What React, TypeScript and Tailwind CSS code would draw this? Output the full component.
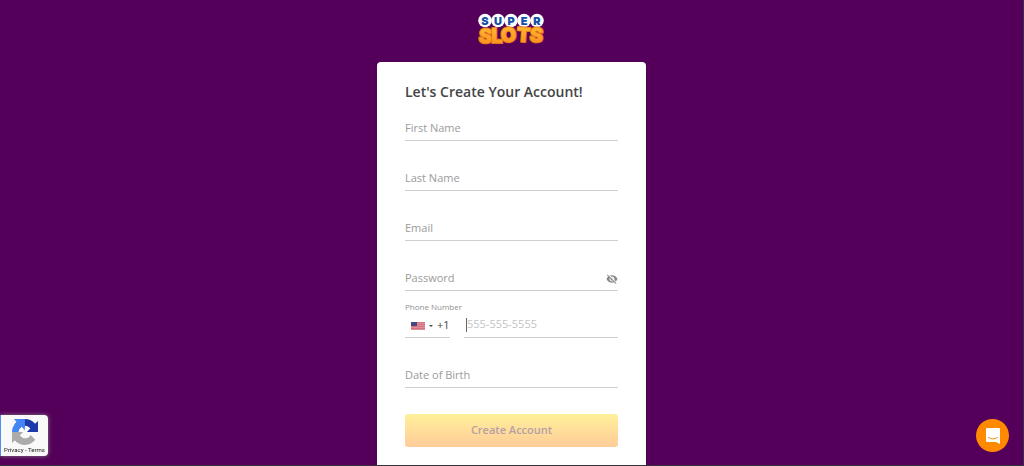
import { useState } from "react";
import { MdVisibilityOff } from "react-icons/md";

const inputStyle =
  "h-6 w-full min-w-0 border-b border-[#cfcfcf] bg-transparent pb-0.5 text-[11px] text-[#444] placeholder:text-[#9b9b9b] placeholder:opacity-100 outline-none";

const Field = ({ label, type = "text" }: { label: string; type?: string }) => (
  <input aria-label={label} placeholder={label} type={type} className={inputStyle} />
);

const superLetters = [
  { char: "S", x: 8 },
  { char: "U", x: 21 },
  { char: "P", x: 34 },
  { char: "E", x: 47 },
  { char: "R", x: 60 },
];

const slotsLetters = [
  { char: "S", x: 8, y: 31, rotate: 5 },
  { char: "L", x: 20, y: 31, rotate: 0 },
  { char: "O", x: 32, y: 30, rotate: -4 },
  { char: "T", x: 46, y: 30, rotate: 4 },
  { char: "S", x: 59, y: 30, rotate: 5 },
];

const Logo = () => (
  <svg
    viewBox="0 0 70 36"
    className="h-9 w-[70px] overflow-visible font-['Inter',sans-serif]"
    textAnchor="middle"
    role="img"
    aria-label="Super Slots"
  >
    {superLetters.map(({ char, x }) => (
      <g key={char}>
        <circle cx={x} cy="8.5" r="6.8" fill="#fff" />
        <text x={x} y="12.5" fontSize="11" fontWeight="900" fill="#1550a5">
          {char}
        </text>
      </g>
    ))}
    {slotsLetters.map(({ char, x, y, rotate }, i) => (
      <text
        key={i}
        x={x}
        y={y}
        transform={`rotate(${rotate} ${x} ${y})`}
        fontSize="20"
        fontWeight="900"
        fill="url(#slots)"
        stroke="#e8781d"
        strokeWidth="2"
        strokeLinejoin="round"
        paintOrder="stroke"
      >
        {char}
      </text>
    ))}
    <defs>
      <linearGradient id="slots" x1="0" y1="0" x2="0" y2="1">
        <stop offset="0.2" stopColor="#ffb52e" />
        <stop offset="1" stopColor="#f98a1c" />
      </linearGradient>
    </defs>
  </svg>
);

const Flag = () => (
  <svg viewBox="0 0 14 8" className="h-2 w-3.5 shrink-0" aria-hidden="true">
    <rect width="14" height="8" fill="#dd8f99" />
    <path d="M0 .5h14M0 2.5h14M0 4.5h14M0 6.5h14" stroke="#d4737f" strokeWidth="1" />
    <rect width="6" height="4" fill="#474782" />
  </svg>
);

const PhoneField = () => (
  <div className="mt-2.5">
    <label htmlFor="phone" className="block h-[13px] text-[8px] leading-3 text-[#8f8f8f]">
      Phone Number
    </label>
    <div className="flex gap-3.5">
      <div className="flex h-6 w-[45px] shrink-0 items-center gap-1 border-b border-[#cfcfcf] pl-1.5">
        <Flag />
        <svg viewBox="0 0 4 2" className="h-0.5 w-1 shrink-0" aria-hidden="true">
          <path d="M0 0h4L2 2z" fill="#444" />
        </svg>
        <select
          aria-label="Country code"
          className="w-4 shrink-0 appearance-none bg-transparent text-[11px] text-[#444] outline-none"
        >
          <option>+1</option>
        </select>
      </div>
      <div className="flex h-6 min-w-0 grow items-center border-b border-[#cfcfcf] pb-0.5 pl-0.5">
        <span className="h-3.5 w-px shrink-0 bg-[#666]" />
        <input
          id="phone"
          type="tel"
          placeholder="555-555-5555"
          className="w-full min-w-0 bg-transparent text-[11px] text-[#444] placeholder:text-[#c4c4c4] placeholder:opacity-100 outline-none"
        />
      </div>
    </div>
  </div>
);

const RecaptchaBadge = () => (
  <aside className="fixed bottom-2.5 left-0 flex h-[41px] w-12 flex-col items-center rounded-r-sm border-l border-[#4a90f5] bg-[#f9f9f9] pt-1 shadow-[0_0_4px_#808080]">
    <svg viewBox="0 0 64 64" className="size-[26px] shrink-0" aria-hidden="true">
      <path
        fill="#1c3aa9"
        d="M64 31.955l-.033-1.37V4.687l-7.16 7.16C50.948 4.674 42.033.093 32.05.093c-10.4 0-19.622 4.96-25.458 12.64l11.736 11.86a15.55 15.55 0 0 1 4.754-5.334c2.05-1.6 4.952-2.906 8.968-2.906.485 0 .86.057 1.135.163 4.976.393 9.288 3.14 11.828 7.124l-8.307 8.307L64 31.953"
      />
      <path
        fill="#4285f4"
        d="M31.862.094l-1.37.033H4.594l7.16 7.16C4.58 13.147 0 22.06 0 32.046c0 10.4 4.96 19.622 12.64 25.458L24.5 45.768a15.55 15.55 0 0 1-5.334-4.754c-1.6-2.05-2.906-4.952-2.906-8.968 0-.485.057-.86.163-1.135.393-4.976 3.14-9.288 7.124-11.828l8.307 8.307L31.86.095"
      />
      <path
        fill="#ababab"
        d="M.001 32.045l.033 1.37v25.898l7.16-7.16c5.86 7.173 14.774 11.754 24.76 11.754 10.4 0 19.622-4.96 25.458-12.64l-11.736-11.86a15.55 15.55 0 0 1-4.754 5.334c-2.05 1.6-4.952 2.906-8.968 2.906-.485 0-.86-.057-1.135-.163-4.976-.393-9.288-3.14-11.828-7.124l8.307-8.307c-10.522.04-22.4.066-27.295-.005"
      />
    </svg>
    <p className="whitespace-nowrap font-['Roboto',sans-serif] text-[6px] leading-[10px] text-[#222]">
      <a href="#privacy">Privacy</a> - <a href="#terms">Terms</a>
    </p>
  </aside>
);

const ChatButton = () => (
  <button
    type="button"
    aria-label="Open chat"
    className="fixed right-[15px] bottom-3.5 flex size-[33px] items-center justify-center rounded-full bg-[#ff8a00]"
  >
    <svg viewBox="0 0 16 18" className="h-[18px] w-4" aria-hidden="true">
      <path d="M2 1h12a1 1 0 0 1 1 1v15l-4-2H2a1 1 0 0 1-1-1V2a1 1 0 0 1 1-1z" fill="#fff" />
      <path d="M3.5 10.5q4.5 3 9 0" fill="none" stroke="#ff8a00" strokeWidth="1" strokeLinecap="round" />
    </svg>
  </button>
);

const App = () => {
  const [showPassword, setShowPassword] = useState<boolean>(false);

  return (
    <div className="flex min-h-screen flex-col items-center border-r border-b border-[#35323b] bg-[#54005a] font-['Open_Sans',sans-serif]">
      <header className="pt-3 pb-3.5">
        <Logo />
      </header>
      <main className="w-full max-w-[269px] grow rounded-t bg-white px-7 pt-5 pb-4">
        <h1 className="text-sm leading-5 font-semibold text-[#444]">Let's Create Your Account!</h1>
        <form className="mt-[15px]" onSubmit={(e) => e.preventDefault()}>
          <div className="flex flex-col gap-[26px]">
            <Field label="First Name" />
            <Field label="Last Name" />
            <Field label="Email" type="email" />
            <div className="flex h-6 items-center border-b border-[#cfcfcf]">
              <input
                aria-label="Password"
                placeholder="Password"
                type={showPassword ? "text" : "password"}
                className="w-full min-w-0 bg-transparent text-[11px] text-[#444] placeholder:text-[#9b9b9b] placeholder:opacity-100 outline-none"
              />
              <button
                type="button"
                aria-label="Toggle password"
                onClick={() => setShowPassword((prev) => !prev)}
              >
                <MdVisibilityOff className="size-3 text-[#888]" />
              </button>
            </div>
          </div>
          <PhoneField />
          <div className="mt-[26px] flex">
            <Field label="Date of Birth" />
          </div>
          <button
            type="submit"
            className="mt-[26px] h-[33px] w-full rounded-[3px] bg-linear-to-b from-[#fff099] to-[#ffcc99] text-[11px] font-semibold text-[#b5a0a6]"
          >
            Create Account
          </button>
        </form>
      </main>
      <RecaptchaBadge />
      <ChatButton />
    </div>
  );
};

export default App;
